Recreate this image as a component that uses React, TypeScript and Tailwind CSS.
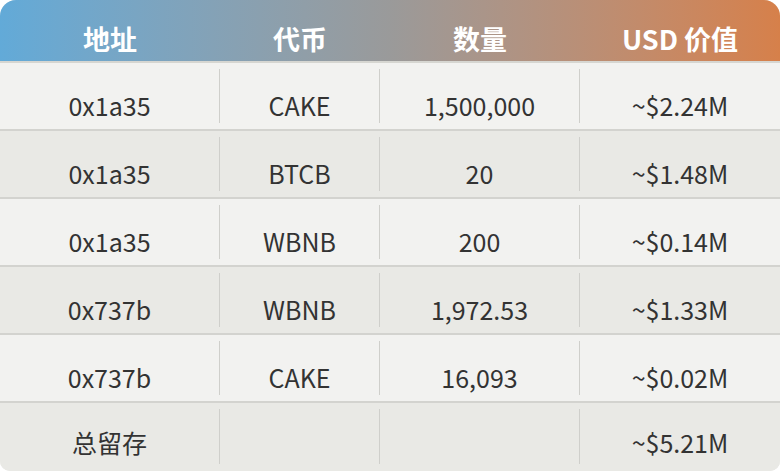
import React from "react";

const rows = [
  ["0x1a35", "CAKE", "1,500,000", "~$2.24M"],
  ["0x1a35", "BTCB", "20", "~$1.48M"],
  ["0x1a35", "WBNB", "200", "~$0.14M"],
  ["0x737b", "WBNB", "1,972.53", "~$1.33M"],
  ["0x737b", "CAKE", "16,093", "~$0.02M"],
  ["总留存", "", "", "~$5.21M"],
];

const widths = ["w-[220px]", "w-[160px]", "w-[200px]", "w-[200px]"];

export default function App() {
  return (
    <div
      className="w-[780px] h-[471px] bg-white"
      style={{ fontFamily: '"Noto Sans CJK SC", "Noto Sans", sans-serif' }}
    >
      <div className="w-[780px] h-[471px] rounded-t-[16px] rounded-b-[10px] overflow-hidden flex flex-col bg-[#e9e9e5]">
        <div className="h-[61px] shrink-0 flex bg-gradient-to-r from-[#62aad8] via-[#9a9a9a] to-[#d6804a] border-b-2 border-[#d6d6d1] box-content">
          {["地址", "代币", "数量", "USD 价值"].map((h, i) => (
            <div
              key={i}
              className={`${widths[i]} flex items-center justify-center pt-[16px] text-white font-bold text-[27px] leading-none`}
            >
              {h}
            </div>
          ))}
        </div>
        {rows.map((r, ri) => {
          const last = ri === rows.length - 1;
          return (
            <div
              key={ri}
              className={`flex ${last ? "flex-1 min-h-0 pb-[1px]" : "h-[68px] shrink-0 border-b-2 border-[#d3d3cf]"} ${ri % 2 === 0 ? "bg-[#f2f2f0]" : "bg-[#e9e9e5]"}`}
            >
              {r.map((c, ci) => (
                <div key={ci} className={`${widths[ci]} flex items-center py-[6px]`}>
                  <div
                    className={`flex-1 h-full flex items-center justify-center ${last ? "pt-[12px]" : "pt-[18px]"} text-[25px] leading-none text-[#333333] ${ci < 3 ? "border-r border-[#cfcfcb]" : ""}`}
                  >
                    {c}
                  </div>
                </div>
              ))}
            </div>
          );
        })}
      </div>
    </div>
  );
}
